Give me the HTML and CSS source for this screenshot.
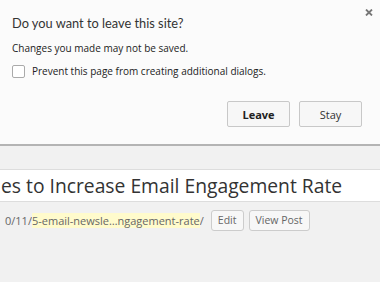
FILE: index.html
```html
<!DOCTYPE html>
<html>
<head>
<meta charset="utf-8">
<link rel="stylesheet" href="styles.css">
</head>
<body>
<div class="dialog">
  <div class="close">
    <svg width="8" height="7" viewBox="0 0 8 7"><path d="M1 0.5L7 6.5M7 0.5L1 6.5" stroke="#777" stroke-width="1.8"/></svg>
  </div>
  <div class="d-title">Do you want to leave this site?</div>
  <div class="d-msg">Changes you made may not be saved.</div>
  <label class="d-check"><span class="box"></span><span>Prevent this page from creating additional dialogs.</span></label>
  <div class="d-buttons">
    <button class="btn leave">Leave</button>
    <button class="btn">Stay</button>
  </div>
</div>
<div class="page">
  <div class="title-box">es to Increase Email Engagement Rate</div>
  <div class="permalink">
    <span class="path first">0/11/</span><span class="slug">5-email-newsle…ngagement-rate</span><span class="path">/</span>
    <span class="small-btn">Edit</span>
    <span class="small-btn">View Post</span>
  </div>
</div>
</body>
</html>
```
FILE: styles.css
```css
html, body { margin: 0; padding: 0; }
body {
  width: 380px;
  height: 282px;
  overflow: hidden;
  background: #f1f1f1;
  font-family: "Open Sans", "Noto Sans", sans-serif;
}
.dialog {
  position: relative;
  height: 146px;
  background: #fbfbfb;
  border-bottom: 2px solid #b4b4b4;
  box-sizing: border-box;
  padding: 13px 0 0 12px;
  color: #222;
}
.close {
  position: absolute;
  right: 7px;
  top: 9px;
  line-height: 0;
}
.close svg { display: block; }
.d-title {
  font-family: "Lato", "Open Sans", sans-serif;
  font-size: 12.8px;
  line-height: 20px;
  color: #333;
}
.d-msg {
  margin-top: 8px;
  font-size: 10px;
  line-height: 14px;
}
.d-check {
  display: flex;
  align-items: center;
  gap: 7px;
  margin-top: 9px;
  font-size: 10px;
  line-height: 14px;
}
.box {
  width: 11px;
  height: 11px;
  border: 1px solid #aaa;
  border-radius: 2px;
  background: #fff;
}
.d-buttons {
  display: flex;
  justify-content: flex-end;
  gap: 9px;
  margin-top: 23px;
  padding-right: 18px;
}
.btn {
  width: 63px;
  height: 26px;
  border: 1px solid #c8c8c8;
  border-radius: 2px;
  background: #f7f7f7;
  font-family: "Open Sans", "Noto Sans", sans-serif;
  font-size: 11px;
  color: #333;
  padding: 0;
}
.btn.leave { font-weight: bold; color: #222; }
.page {
  padding-top: 23px;
}
.title-box {
  background: #fff;
  border-top: 1px solid #ddd;
  border-bottom: 1px solid #ddd;
  height: 31px;
  line-height: 31px;
  font-size: 19.3px;
  color: #333;
  white-space: nowrap;
  padding-left: 1px;
}
.permalink {
  display: flex;
  align-items: center;
  margin-top: 8px;
  font-size: 11px;
  color: #666;
  white-space: nowrap;
}
.path.first { padding-left: 5px; }
.slug { background: #fffbcc; color: #666; }
.small-btn {
  margin-left: 7px;
  display: inline-block;
  border: 1px solid #ccc;
  border-radius: 3px;
  background: #f7f7f7;
  padding: 0 6px;
  height: 19px;
  line-height: 19px;
  font-size: 10.5px;
  color: #666;
}
.small-btn + .small-btn { margin-left: 5px; }
```
